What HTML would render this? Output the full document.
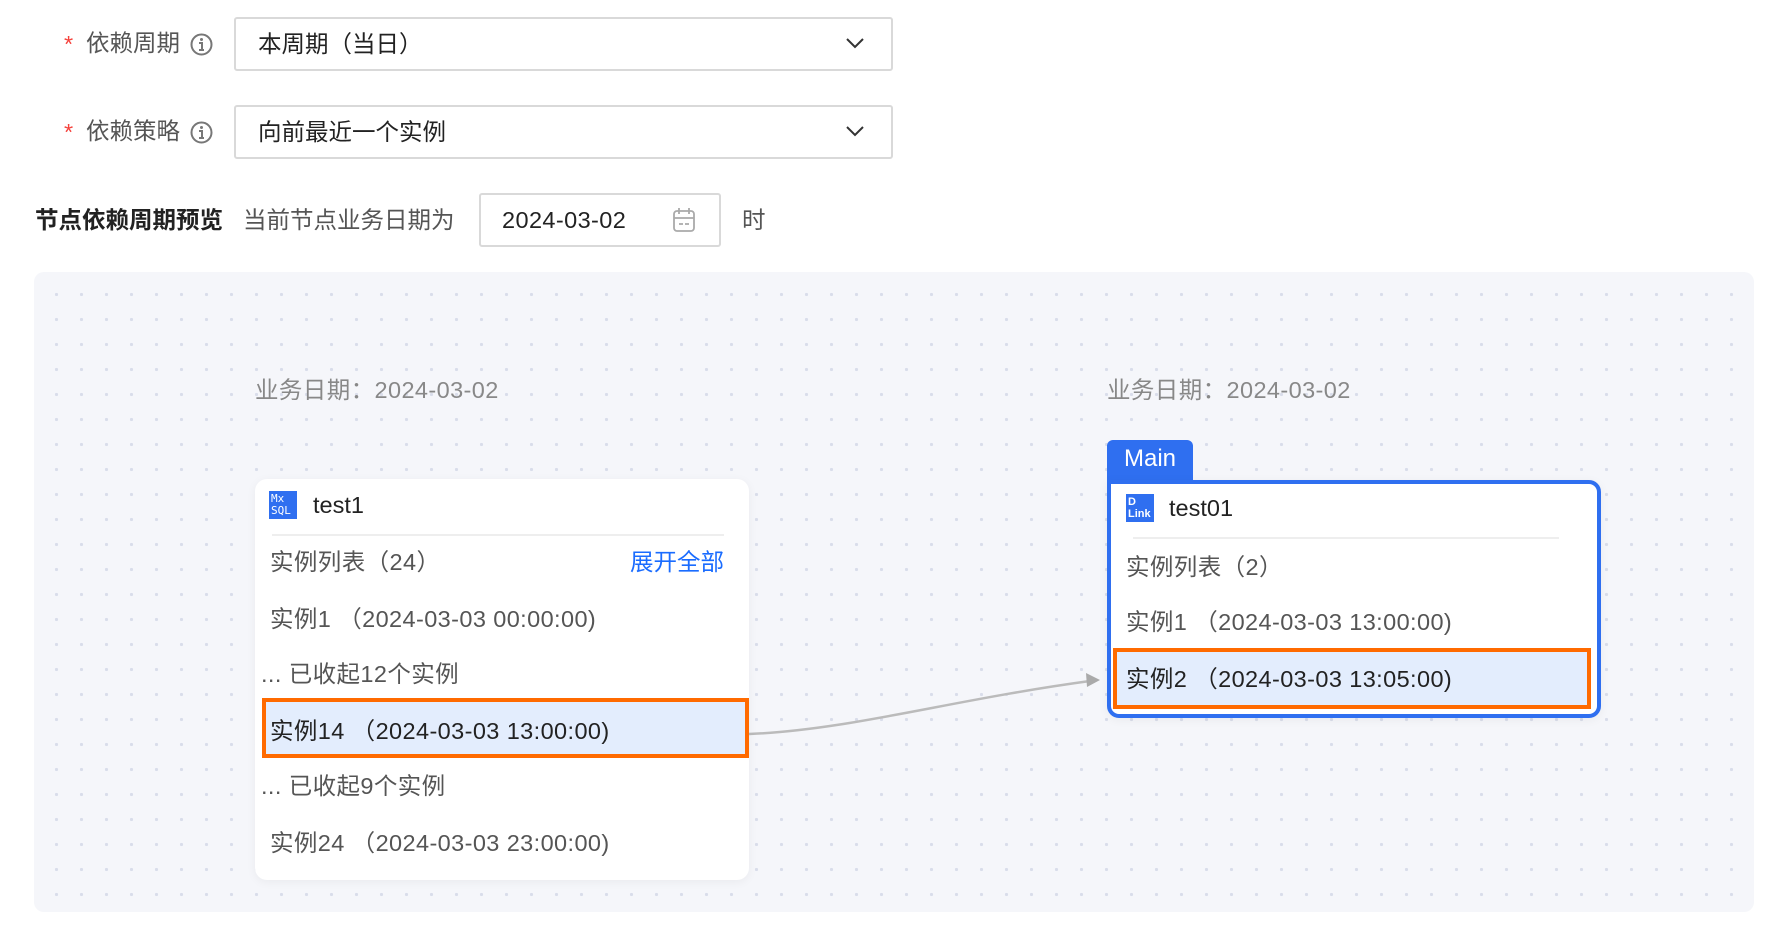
<!DOCTYPE html>
<html><head><meta charset="utf-8"><style>
*{margin:0;padding:0;box-sizing:border-box}
body{width:1774px;height:942px;background:#fff;position:relative;overflow:hidden;font-family:"Liberation Sans","Noto Sans CJK SC",sans-serif;font-size:23.5px;color:#333}
.a{position:absolute;white-space:nowrap;line-height:1}
.n{letter-spacing:0.4px}
.sel{position:absolute;left:234px;width:659px;height:54px;border:2px solid #d9d9d9;border-radius:3px;background:#fff}
.sel span{position:absolute;left:22px;top:14px;color:#222;font-size:23.5px;line-height:1}
.sel svg{position:absolute;right:26px;top:17px}
.canvas{position:absolute;left:34px;top:272px;width:1720px;height:640px;border-radius:10px;background-color:#f5f6fa;background-image:radial-gradient(circle,#d9ddea 1.5px,transparent 1.8px);background-size:25px 25px;background-position:10px 10px}
.card{position:absolute;background:#fff;border-radius:12px;box-shadow:0 2px 10px rgba(0,0,0,.05)}
.hl{position:absolute;background:#e3edfd;border:4px solid #ff6a00}
.g{color:#555}
</style></head><body>
<div class="a" style="left:64px;top:33px;color:#f5423c">*</div>
<div class="a g" style="left:86px;top:32px">依赖周期</div>
<svg class="a" style="left:190px;top:33px" width="23" height="23" viewBox="0 0 23 23"><circle cx="11.5" cy="11.5" r="10" fill="none" stroke="#777" stroke-width="2"/><circle cx="11.5" cy="6.5" r="1.5" fill="#777"/><path d="M9 10h3v7M9 17h5" stroke="#777" stroke-width="2" fill="none"/></svg>
<div class="sel" style="top:17px"><span>本周期（当日）</span><svg width="20" height="14" viewBox="0 0 20 14"><path d="M2 3l8 8 8-8" fill="none" stroke="#333" stroke-width="2"/></svg></div>
<div class="a" style="left:64px;top:121px;color:#f5423c">*</div>
<div class="a g" style="left:86px;top:120px">依赖策略</div>
<svg class="a" style="left:190px;top:121px" width="23" height="23" viewBox="0 0 23 23"><circle cx="11.5" cy="11.5" r="10" fill="none" stroke="#777" stroke-width="2"/><circle cx="11.5" cy="6.5" r="1.5" fill="#777"/><path d="M9 10h3v7M9 17h5" stroke="#777" stroke-width="2" fill="none"/></svg>
<div class="sel" style="top:105px"><span>向前最近一个实例</span><svg width="20" height="14" viewBox="0 0 20 14"><path d="M2 3l8 8 8-8" fill="none" stroke="#333" stroke-width="2"/></svg></div>
<div class="a" style="left:35px;top:209px;font-weight:bold;color:#222">节点依赖周期预览</div>
<div class="a g" style="left:243px;top:209px">当前节点业务日期为</div>
<div style="position:absolute;left:479px;top:193px;width:242px;height:54px;border:2px solid #d9d9d9;border-radius:3px"></div>
<div class="a n" style="left:502px;top:209px;color:#222">2024-03-02</div>
<svg class="a" style="left:672px;top:207px" width="24" height="26" viewBox="0 0 24 26"><rect x="2" y="4" width="20" height="20" rx="3" fill="none" stroke="#aaa" stroke-width="1.8"/><path d="M7 1v6M17 1v6M2 11h20M7 17h4M13 17h4" stroke="#aaa" stroke-width="1.8"/></svg>
<div class="a g" style="left:742px;top:209px">时</div>
<div class="canvas"></div>
<div class="a n" style="left:255px;top:379px;color:#888">业务日期：2024-03-02</div>
<div class="a n" style="left:1107px;top:379px;color:#888">业务日期：2024-03-02</div>
<svg style="position:absolute;left:0;top:0" width="1774" height="942"><path d="M749 734 C850 730 950 700 1090 681" fill="none" stroke="#bbb" stroke-width="2.5"/><path d="M1100 680l-14-7 1 14z" fill="#aaa"/></svg>
<div class="card" style="left:255px;top:479px;width:494px;height:401px">
<div style="position:absolute;left:14px;top:12px;width:28px;height:28px;background:#2f6ff0;color:#fff;font-size:11px;line-height:12px;padding:2px 2px;font-family:'DejaVu Sans Mono',monospace">Mx<br>SQL</div>
<div class="a" style="left:58px;top:15px;color:#222">test1</div>
<div style="position:absolute;left:17px;top:55px;width:452px;height:2px;background:#eee"></div>
<div class="a g n" style="left:15px;top:72px">实例列表（24）</div>
<div class="a" style="right:25px;top:72px;color:#1a6cff">展开全部</div>
<div class="a g n" style="left:15px;top:129px">实例1 （2024-03-03 00:00:00)</div>
<div class="a g n" style="left:6px;top:184px">... 已收起12个实例</div>
<div class="hl" style="left:7px;top:219px;width:487px;height:60px"></div>
<div class="a n" style="left:15px;top:241px;color:#222">实例14 （2024-03-03 13:00:00)</div>
<div class="a g n" style="left:6px;top:296px">... 已收起9个实例</div>
<div class="a g n" style="left:15px;top:353px">实例24 （2024-03-03 23:00:00)</div>
</div>
<div style="position:absolute;left:1107px;top:440px;width:86px;height:44px;background:#2f6ff0;border-radius:6px 6px 0 0"></div>
<div class="a" style="left:1124px;top:447px;color:#fff;font-size:24px">Main</div>
<div class="card" style="left:1107px;top:480px;width:494px;height:238px;border:4px solid #2f6ff0;border-top-left-radius:0">
<div style="position:absolute;left:15px;top:10px;width:28px;height:28px;background:#2f6ff0;color:#fff;font-size:11px;line-height:12px;padding:2px 2px;font-weight:bold">D<br>Link</div>
<div class="a" style="left:58px;top:13px;color:#222">test01</div>
<div style="position:absolute;left:22px;top:53px;width:426px;height:2px;background:#eee"></div>
<div class="a g n" style="left:15px;top:72px">实例列表（2）</div>
<div class="a g n" style="left:15px;top:127px">实例1 （2024-03-03 13:00:00)</div>
<div class="hl" style="left:2px;top:164px;width:478px;height:61px"></div>
<div class="a n" style="left:15px;top:184px;color:#222">实例2 （2024-03-03 13:05:00)</div>
</div>
</body></html>
